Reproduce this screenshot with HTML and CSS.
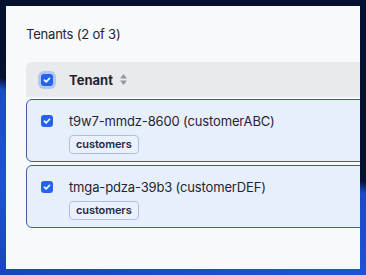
FILE: index.html
```html
<!DOCTYPE html>
<html lang="en">

<head>
    <meta charset="UTF-8">
    <meta name="viewport" content="width=device-width, initial-scale=1.0">
    <title>Tenants</title>
    <link rel="stylesheet" href="styles.css">
</head>

<body>
    <div class="panel">
        <h3 class="title">Tenants (2 of 3)</h3>
        <div class="table">
            <div class="table-head">
                <span class="check check-focus">
                    <svg viewBox="0 0 12 12" width="12" height="12"><path d="M3.4 6.2l1.8 1.7 3.4-3.6" fill="none" stroke="#fff" stroke-width="1.6" stroke-linecap="round" stroke-linejoin="round"/></svg>
                </span>
                <span class="head-label">Tenant</span>
                <svg class="sort" viewBox="0 0 8 12" width="9" height="13"><path d="M4 1l3.2 4H0.8z M4 11l3.2-4H0.8z" fill="#9298a1"/></svg>
            </div>
            <div class="row">
                <span class="check">
                    <svg viewBox="0 0 12 12" width="12" height="12"><path d="M3.4 6.2l1.8 1.7 3.4-3.6" fill="none" stroke="#fff" stroke-width="1.6" stroke-linecap="round" stroke-linejoin="round"/></svg>
                </span>
                <div class="cell">
                    <div class="name">t9w7-mmdz-8600 (customerABC)</div>
                    <span class="badge">customers</span>
                </div>
            </div>
            <div class="row">
                <span class="check">
                    <svg viewBox="0 0 12 12" width="12" height="12"><path d="M3.4 6.2l1.8 1.7 3.4-3.6" fill="none" stroke="#fff" stroke-width="1.6" stroke-linecap="round" stroke-linejoin="round"/></svg>
                </span>
                <div class="cell">
                    <div class="name">tmga-pdza-39b3 (customerDEF)</div>
                    <span class="badge">customers</span>
                </div>
            </div>
        </div>
    </div>
</body>

</html>
```

FILE: styles.css
```css
* {
    margin: 0px;
    padding: 0px;
    box-sizing: border-box;
}

html,
body {
    height: 100%;
}

body {
    font-family: Inter, "Noto Sans", sans-serif;
    background: linear-gradient(196deg, #03102f 0%, #04122f 48%, #1a4bc8 51%, #1d52d8 75%, #1a44be 100%);
    padding: 6px;
    overflow: hidden;
}

.panel {
    width: 354px;
    height: 263px;
    background: #f8f9fb;
    padding: 18px 0 0 20px;
    overflow: hidden;
}

.title {
    font-size: 13px;
    font-weight: 400;
    line-height: 20px;
    letter-spacing: -0.2px;
    color: #23262c;
}

.table {
    width: 400px;
    margin-top: 18px;
}

.table-head {
    height: 35px;
    background: #e8eaed;
    border-radius: 6px 0 0 0;
    display: flex;
    align-items: center;
    padding-left: 15px;
}

.check {
    width: 12px;
    height: 12px;
    border-radius: 3px;
    background: #2563eb;
    display: flex;
    align-items: center;
    justify-content: center;
    flex-shrink: 0;
}

.check-focus {
    box-shadow: 0 0 0 3px #b3c7f3;
}

.head-label {
    font-size: 13px;
    font-weight: 700;
    color: #1f242c;
    margin-left: 16px;
}

.sort {
    margin-left: 6px;
}

.row {
    margin-top: 2px;
    height: 63px;
    background: #e8effc;
    border: 1px solid #3d6196;
    border-radius: 6px 0 0 6px;
    display: flex;
    align-items: flex-start;
    padding: 15px 0 0 14px;
}

.row + .row {
    margin-top: 3px;
}

.cell {
    margin-left: 16px;
    margin-top: -3px;
}

.name {
    font-size: 13px;
    line-height: 18px;
    letter-spacing: -0.15px;
    color: #1f2633;
}

.badge {
    display: inline-block;
    margin-top: 5px;
    padding: 0 6px;
    height: 19px;
    line-height: 17px;
    font-size: 11px;
    font-weight: 600;
    letter-spacing: -0.1px;
    color: #1e2a44;
    background: #eaf1fd;
    border: 1px solid #a9c1e4;
    border-radius: 4px;
}
```
